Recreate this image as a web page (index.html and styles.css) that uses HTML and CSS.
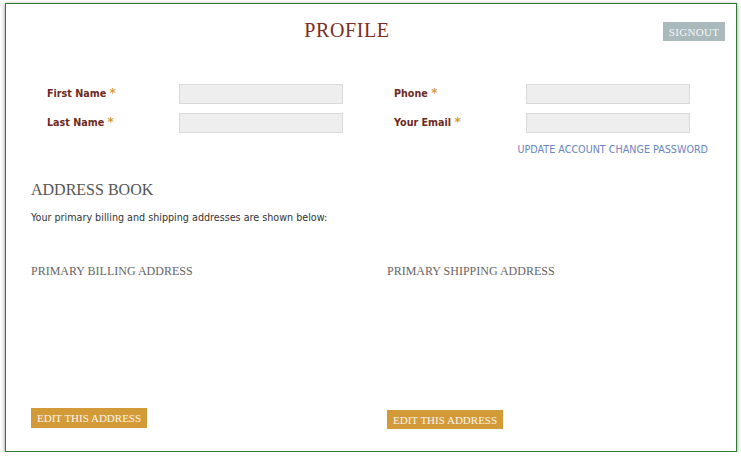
FILE: index.html
```
<!DOCTYPE html>
<html>
<head>
<meta charset="utf-8">
<link rel="stylesheet" href="styles.css">
</head>
<body>
<div class="frame">
  <header class="top">
    <div></div>
    <h1 class="title">PROFILE</h1>
    <div class="signout-wrap"><button class="signout">SIGNOUT</button></div>
  </header>

  <form class="account">
    <div class="fields">
      <label class="lbl">First Name <span class="req">*</span></label>
      <input class="inp" type="text">
      <label class="lbl">Last Name <span class="req">*</span></label>
      <input class="inp" type="text">
    </div>
    <div class="fields">
      <label class="lbl">Phone <span class="req">*</span></label>
      <input class="inp" type="text">
      <label class="lbl">Your Email <span class="req">*</span></label>
      <input class="inp" type="text">
    </div>
  </form>

  <div class="links"><a href="#">UPDATE ACCOUNT</a> <a href="#">CHANGE PASSWORD</a></div>

  <section class="book">
    <h2 class="book-title">ADDRESS BOOK</h2>
    <p class="intro">Your primary billing and shipping addresses are shown below:</p>
    <div class="addresses">
      <div class="addr">
        <h3 class="addr-title">PRIMARY BILLING ADDRESS</h3>
        <button class="edit">EDIT THIS ADDRESS</button>
      </div>
      <div class="addr">
        <h3 class="addr-title">PRIMARY SHIPPING ADDRESS</h3>
        <button class="edit edit-low">EDIT THIS ADDRESS</button>
      </div>
    </div>
  </section>
</div>
</body>
</html>
```

FILE: styles.css
```
html, body {
  margin: 0;
  padding: 0;
  background: #ffffff;
}

body {
  padding: 3px 5px 0 5px;
}

.frame {
  box-sizing: border-box;
  width: 732px;
  height: 449px;
  border: 1px solid #2f7b36;
  background: #ffffff;
  box-shadow: 0 1px 4px rgba(0, 0, 0, 0.45);
  padding: 12px 11px 0 25px;
  font-family: "DejaVu Sans", Verdana, sans-serif;
}

.top {
  display: grid;
  grid-template-columns: 1fr auto 1fr;
  align-items: start;
}

.title {
  margin: 2px 0 0 -62px;
  font-family: "Liberation Serif", "Times New Roman", serif;
  font-weight: normal;
  font-size: 20px;
  line-height: 24px;
  letter-spacing: 0.6px;
  color: #7b2d26;
}

.signout-wrap {
  display: flex;
  justify-content: flex-end;
}

.signout {
  margin-top: 6px;
  height: 19px;
  width: 62px;
  padding: 0;
  border: none;
  background: #a9b9bc;
  color: #f4f6f6;
  font-family: "Liberation Serif", "Times New Roman", serif;
  font-size: 11px;
  letter-spacing: 0.3px;
}

.account {
  display: flex;
  gap: 51px;
  margin: 42px 0 0 16px;
}

.fields {
  display: grid;
  grid-template-columns: 132px 164px;
  row-gap: 9px;
  align-items: center;
}

.lbl {
  font-weight: bold;
  font-size: 9.6px;
  color: #6d2a23;
  line-height: 12px;
  margin-top: -2px;
}

.req {
  color: #d69c38;
  font-size: 12px;
}

.inp {
  box-sizing: border-box;
  height: 20px;
  width: 164px;
  margin: 0;
  border: 1px solid #dadada;
  background: #eeeeee;
}

.links {
  margin-top: 11px;
  padding-right: 17px;
  text-align: right;
  font-size: 9.6px;
  line-height: 12px;
}

.links a {
  color: #6a85c2;
  text-decoration: none;
}

.book-title {
  margin: 24px 0 0 0;
  font-family: "Liberation Serif", "Times New Roman", serif;
  font-weight: normal;
  font-size: 16px;
  line-height: 20px;
  color: #555555;
}

.intro {
  margin: 12px 0 0 0;
  font-size: 9.6px;
  line-height: 12px;
  color: #333333;
}

.addresses {
  display: grid;
  grid-template-columns: 356px 1fr;
  margin-top: 40px;
}

.addr {
  display: flex;
  flex-direction: column;
  align-items: flex-start;
}

.addr-title {
  margin: 0;
  font-family: "Liberation Serif", "Times New Roman", serif;
  font-weight: normal;
  font-size: 12px;
  line-height: 15px;
  color: #666666;
}

.edit {
  margin-top: 129px;
  height: 20px;
  padding: 0 6px;
  border: none;
  background: #d39a38;
  color: #fbf5ea;
  font-family: "Liberation Serif", "Times New Roman", serif;
  font-size: 11px;
  line-height: 20px;
}

.edit-low {
  margin-top: 131px;
  height: 19px;
}
```
